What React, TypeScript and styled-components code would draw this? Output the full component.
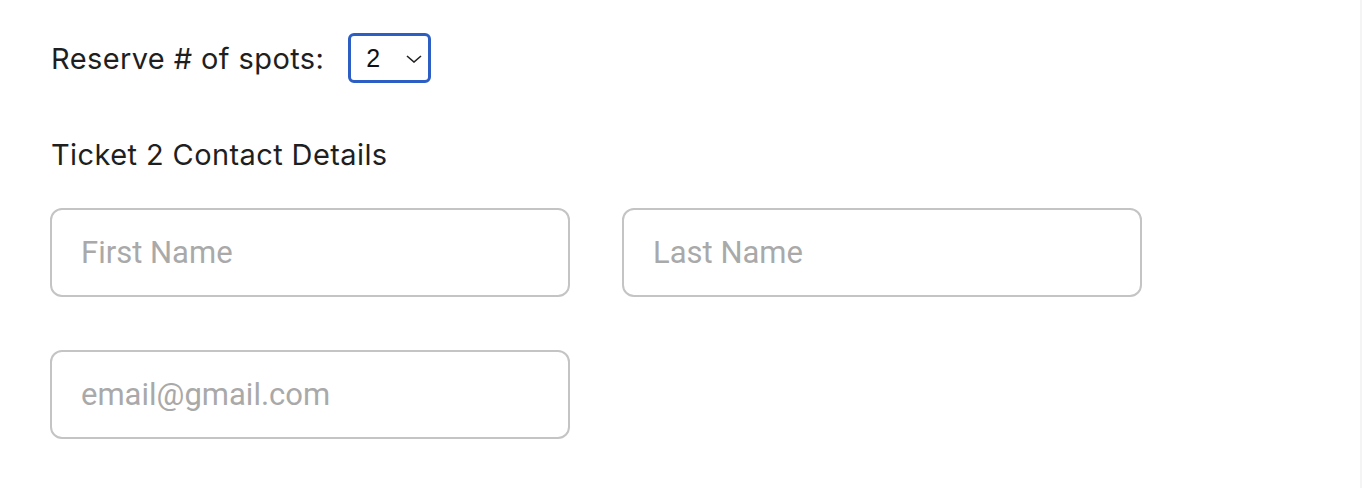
import styled, { createGlobalStyle } from "styled-components";
import { useState } from "react";

const GlobalStyle = createGlobalStyle`
  html, body {
    margin: 0;
    padding: 0;
    background: #ffffff;
  }
  * {
    box-sizing: border-box;
  }
`;

const Page = styled.div`
  width: 1362px;
  height: 488px;
  background: #ffffff;
  border-right: 2px solid #f4f4f4;
  padding: 33px 0 0 50px;
  font-family: Inter, "Liberation Sans", sans-serif;
  color: #1f1f1f;
`;

const SpotsRow = styled.div`
  display: flex;
  align-items: center;
  gap: 24px;
  height: 50px;
`;

const Label = styled.label`
  font-size: 29px;
  letter-spacing: 0.4px;
  padding-left: 1px;
`;

const SelectBox = styled.div`
  position: relative;
  width: 83px;
  height: 50px;
  border: 3px solid #2c5ec4;
  border-radius: 6px;
  display: flex;
  align-items: center;

  select {
    appearance: none;
    border: none;
    outline: none;
    background: transparent;
    width: 100%;
    height: 100%;
    padding-left: 15px;
    font-family: "Liberation Sans", Arial, sans-serif;
    font-size: 25px;
    color: #111111;
  }

  svg {
    position: absolute;
    right: 6px;
    top: 19px;
    pointer-events: none;
  }
`;

const Heading = styled.h3`
  margin: 50px 0 0;
  font-size: 29px;
  font-weight: 400;
  letter-spacing: 0.4px;
  padding-left: 1px;
  line-height: 44px;
`;

const FieldGrid = styled.div`
  display: grid;
  grid-template-columns: 520px 520px;
  column-gap: 52px;
  row-gap: 53px;
  margin-top: 31px;
`;

const Input = styled.input`
  width: 520px;
  height: 89px;
  border: 2px solid #c4c4c4;
  border-radius: 12px;
  padding: 0 29px;
  font-family: Roboto, "Liberation Sans", sans-serif;
  font-size: 31px;
  color: #333333;
  outline: none;

  &::placeholder {
    color: #a9a9a9;
  }
`;

export default function App() {
  const [spots, setSpots] = useState("2");

  return (
    <>
      <GlobalStyle />
      <Page>
        <SpotsRow>
          <Label htmlFor="spots">Reserve # of spots:</Label>
          <SelectBox>
            <select id="spots" value={spots} onChange={(e) => setSpots(e.target.value)}>
              <option value="1">1</option>
              <option value="2">2</option>
              <option value="3">3</option>
              <option value="4">4</option>
            </select>
            <svg width="16" height="8" viewBox="0 0 16 8">
              <path d="M1 1 L8 7 L15 1" fill="none" stroke="#222" strokeWidth="1.6" />
            </svg>
          </SelectBox>
        </SpotsRow>
        <Heading>Ticket {spots} Contact Details</Heading>
        <FieldGrid>
          <Input type="text" placeholder="First Name" />
          <Input type="text" placeholder="Last Name" />
          <Input type="email" placeholder="email@gmail.com" />
        </FieldGrid>
      </Page>
    </>
  );
}
